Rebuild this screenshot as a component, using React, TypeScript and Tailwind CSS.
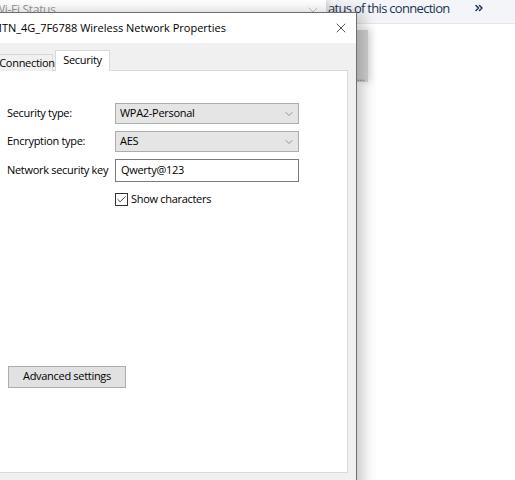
import { Check, ChevronDown, ChevronsRight, X } from "lucide-react";

const font = { fontFamily: '"Segoe UI", "Open Sans", "Liberation Sans", sans-serif' };

const Select = ({ value }: { value: string }) => (
  <div className="flex h-[21px] w-[184px] items-center justify-between border border-[#adadad] bg-[#e5e5e5] pl-[4px] pr-[3px]">
    <span>{value}</span>
    <ChevronDown className="h-[12px] w-[12px] text-[#5a5a5a]" strokeWidth={1.2} />
  </div>
);

const BackgroundWindows = () => (
  <div className="absolute inset-0 bg-white">
    <div className="flex h-[24px] items-start border-b border-[#e6e6e6] bg-[#f3f5f8]">
      <div className="relative h-[14px] w-[326px] overflow-hidden bg-white shadow-[3px_0_5px_rgba(0,0,0,0.12)]">
        <span className="absolute left-[-6px] top-[3px] text-[12px] leading-[14px] text-[#999]">Wi-Fi Status</span>
        <X className="absolute left-[305px] top-[4px] h-[16px] w-[16px] text-[#aaa]" strokeWidth={1} />
      </div>
      <span className="ml-[2px] mt-[-2px] text-[13px] leading-[20px] tracking-[-0.7px] text-[#1e3250]">
        atus of this connection
      </span>
      <ChevronsRight className="ml-[23px] mt-[2px] h-[12px] w-[12px] text-[#1e3250]" strokeWidth={3} />
    </div>
    <div className="ml-[357px] mt-[6px] flex h-[52px] w-[11px] items-end bg-[#cfcfcf] shadow-[3px_0_6px_rgba(0,0,0,0.12)]">
      <span className="text-[10px] leading-[10px] text-[#777]">…</span>
    </div>
  </div>
);

export default function App() {
  return (
    <div className="relative h-[480px] w-[515px] overflow-hidden text-[11px] tracking-[-0.3px] text-black" style={font}>
      <BackgroundWindows />
      <div className="absolute left-[-12px] top-[12px] flex h-[480px] w-[369px] flex-col border-t border-r border-[#6e6e6e] bg-[#f0f0f0] shadow-[6px_0_14px_rgba(0,0,0,0.22)]">
        <div className="flex h-[30px] shrink-0 items-center justify-between bg-white pl-[4px] pr-[7px]">
          <span className="text-[11px] tracking-normal">MTN_4G_7F6788 Wireless Network Properties</span>
          <X className="h-[16px] w-[16px]" strokeWidth={1} />
        </div>
        <div className="flex flex-col pl-[7px] pr-[8px] pt-[7px]">
          <div className="relative z-10 flex h-[21px] items-end pl-[2px]">
            <div className="flex h-[17px] w-[56px] items-center justify-center border border-b-0 border-[#d9d9d9] bg-[#f0f0f0] pl-[4px]">
              Connection
            </div>
            <div className="ml-[2px] flex h-[21px] w-[55px] items-center justify-center border border-b-0 border-[#d9d9d9] bg-white pb-[2px]">
              Security
            </div>
          </div>
          <div className="mt-[-1px] flex h-[403px] flex-col border border-[#d9d9d9] bg-white pl-[11px] pt-[32px]">
            <div className="flex flex-col gap-[7px]">
              <div className="flex items-center">
                <span className="w-[108px]">Security type:</span>
                <Select value="WPA2-Personal" />
              </div>
              <div className="flex items-center">
                <span className="w-[108px]">Encryption type:</span>
                <Select value="AES" />
              </div>
              <div className="flex items-center">
                <span className="w-[108px]">Network security key</span>
                <div className="flex h-[23px] w-[184px] items-center border border-[#7a7a7a] bg-white pl-[5px]">Qwerty@123</div>
              </div>
            </div>
            <label className="ml-[108px] mt-[9px] flex items-center gap-[3px]">
              <span className="flex h-[13px] w-[13px] items-center justify-center border border-[#333] bg-white">
                <Check className="h-[11px] w-[11px]" strokeWidth={1.6} />
              </span>
              Show characters
            </label>
            <button className="ml-[1px] mt-[158px] h-[22px] w-[118px] border border-[#adadad] bg-[#e1e1e1]">
              Advanced settings
            </button>
          </div>
        </div>
      </div>
    </div>
  );
}
